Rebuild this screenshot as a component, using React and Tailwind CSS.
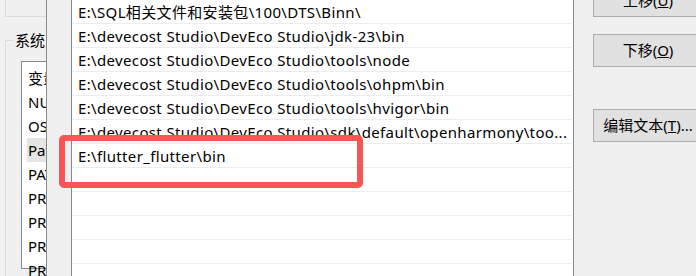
import React from 'react';

const pathRows = [
  'E:\\SQL相关文件和安装包\\100\\DTS\\Binn\\',
  'E:\\devecost Studio\\DevEco Studio\\jdk-23\\bin',
  'E:\\devecost Studio\\DevEco Studio\\tools\\node',
  'E:\\devecost Studio\\DevEco Studio\\tools\\ohpm\\bin',
  'E:\\devecost Studio\\DevEco Studio\\tools\\hvigor\\bin',
  'E:\\devecost Studio\\DevEco Studio\\sdk\\default\\openharmony\\too...',
  'E:\\flutter_flutter\\bin',
  '',
  '',
  '',
  '',
  '',
];

const sysVars = [
  '变量',
  'NUMBER_OF_PROCESSORS',
  'OS',
  'Path',
  'PATHEXT',
  'PROCESSOR_ARCHITECTURE',
  'PROCESSOR_IDENTIFIER',
  'PROCESSOR_LEVEL',
  'PROCESSOR_REVISION',
];

const App = () => {
  return (
    <div className="relative w-[696px] h-[276px] overflow-hidden flex bg-[#f0f0f0] text-black text-[15px] font-['Noto_Sans','Noto_Sans_CJK_SC',sans-serif]">
      {/* Environment variables window behind */}
      <div className="w-[46px] shrink-0 overflow-hidden">
        <div className="w-[200px]">
          {/* bottom of user variables group */}
          <div className="ml-[5px] h-[17px] border-l border-b border-[#dcdcdc]" />

          {/* system variables group */}
          <fieldset className="mt-[13px] ml-[5px] h-[300px] border-l border-t border-[#dcdcdc]">
            <legend className="ml-[8px] px-[1px] leading-[20px] whitespace-nowrap">系统变量(S)</legend>
            <div className="mt-[11px] ml-[15px] h-[208px] w-[170px] border border-[#828790] bg-white pt-[4px]">
              {sysVars.map((name, i) => (
                <div
                  key={name}
                  className={`mx-[5px] h-6 pl-[1px] leading-6 whitespace-nowrap ${i === 3 ? 'bg-[#e5e5e5]' : ''}`}
                >
                  {name}
                </div>
              ))}
            </div>
          </fieldset>
        </div>
      </div>

      {/* Edit environment variable dialog */}
      <div className="flex-1 flex border-l border-[#8a8a8a] bg-[#f0f0f0] pl-[24px]">
        <div className="w-[503px] shrink-0 h-[300px] border-x border-[#828790] bg-white pr-[1px]">
          {pathRows.map((text, i) => (
            <div
              key={i}
              className="h-6 border-b border-[#ececec] pl-[6px] pt-[2px] leading-[21px] tracking-[0.35px] whitespace-nowrap overflow-hidden"
            >
              {text}
            </div>
          ))}
        </div>

        <div className="ml-[19px] -mt-[17px] w-[110px] shrink-0 flex flex-col">
          <button className="h-[34px] border border-[#adadad] bg-[#e1e1e1] text-center">
            上移(<u>U</u>)
          </button>
          <button className="mt-[17px] h-[33px] border border-[#adadad] bg-[#e1e1e1] text-center">
            下移(<u>O</u>)
          </button>
          <button className="mt-[42px] h-[33px] border border-[#adadad] bg-[#e1e1e1] text-center whitespace-nowrap">
            编辑文本(<u>T</u>)...
          </button>
        </div>
      </div>

      {/* annotation box */}
      <div className="absolute left-[59px] top-[135px] w-[304px] h-[53px] border-[6px] border-[#fa5555] rounded-[5px]" />
    </div>
  );
};

export default App;
